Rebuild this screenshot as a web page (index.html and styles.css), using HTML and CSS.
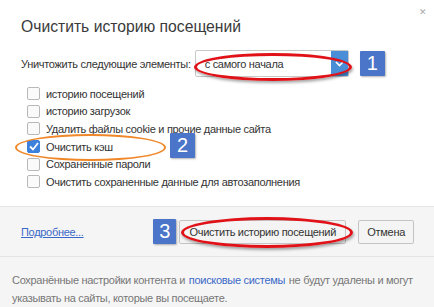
FILE: index.html
```html
<!DOCTYPE html>
<html lang="ru">
<head>
    <meta charset="UTF-8">
    <title>Очистить историю посещений</title>
    <link rel="stylesheet" href="styles.css">
</head>
<body>
    <div class="dialog">
        <span class="close">&#x2715;</span>
        <div class="content">
            <h1 class="title">Очистить историю посещений</h1>
            <div class="period">
                <span class="period-label">Уничтожить следующие элементы:</span>
                <div class="select">
                    <span class="select-text">с самого начала</span>
                    <span class="select-arrow">
                        <svg width="9" height="6" viewBox="0 0 9 6"><path d="M1 1 L4.5 4.5 L8 1" fill="none" stroke="#fff" stroke-width="1.6"/></svg>
                    </span>
                </div>
                <span class="badge">1</span>
            </div>
            <ul class="options">
                <li><span class="box"></span>историю посещений</li>
                <li><span class="box"></span>историю загрузок</li>
                <li><span class="box"></span>Удалить файлы cookie и прочие данные сайта</li>
                <li><span class="box checked">
                    <svg width="10" height="9" viewBox="0 0 10 9"><path d="M1 4.5 L4 7.5 L9 1" fill="none" stroke="#fff" stroke-width="1.8"/></svg>
                </span>Очистить кэш</li>
                <li><span class="box"></span>Сохраненные пароли</li>
                <li><span class="box"></span>Очистить сохраненные данные для автозаполнения</li>
            </ul>
        </div>
        <div class="actions">
            <a href="#" class="more">Подробнее...</a>
            <span class="badge badge-three">3</span>
            <button class="btn btn-main">Очистить историю посещений</button>
            <button class="btn">Отмена</button>
        </div>
        <p class="note">Сохранённые настройки контента и <a href="#">поисковые системы</a> не будут удалены и могут указывать на сайты, которые вы посещаете.</p>

        <!-- пометки поверх скриншота -->
        <span class="badge badge-two">2</span>
        <div class="ring ring-select"></div>
        <div class="ring ring-cache"></div>
        <div class="ring ring-button"></div>
    </div>
</body>
</html>
```

FILE: styles.css
```css
body {
    margin: 0;
    font-family: "Liberation Sans", Arial, sans-serif;
    background: #fff;
}
.dialog {
    position: relative;
    width: 434px;
    height: 307px;
    overflow: hidden;
    background: #fff;
    font-size: 11px;
    letter-spacing: -0.3px;
}
.close {
    position: absolute;
    top: 7px;
    right: 7px;
    font-size: 9px;
    color: #aaa;
}
.content {
    padding: 15px 21px 0 21px;
    height: 191px;
}
.title {
    margin: 0;
    font-size: 15.7px;
    font-weight: normal;
    letter-spacing: 0;
    color: #3a3a3a;
    line-height: 24px;
}
.period {
    display: flex;
    align-items: center;
    margin-top: 11px;
    color: #333;
    white-space: nowrap;
}
.period-label {
    margin-right: 4px;
}
.select {
    display: flex;
    align-items: center;
    width: 152px;
    height: 25px;
    border: 1px solid #c8c8c8;
    border-radius: 2px;
    background: #fff;
}
.select-text {
    flex: 1;
    padding-left: 9px;
}
.select-arrow {
    display: flex;
    align-items: center;
    justify-content: center;
    width: 17px;
    height: 25px;
    background: #4a8ed8;
}
.badge {
    display: inline-flex;
    align-items: center;
    justify-content: center;
    width: 25px;
    height: 25px;
    margin-left: 11px;
    background: #4a75c9;
    color: #fff;
    font-size: 20px;
    letter-spacing: 0;
    border-radius: 1px;
    box-shadow: 1px 1px 2px rgba(0, 0, 0, 0.3);
}
.options {
    list-style: none;
    margin: 8px 0 0 0;
    padding: 0 0 0 6px;
    color: #333;
}
.options li {
    display: flex;
    align-items: center;
    height: 17.6px;
    white-space: nowrap;
}
.box {
    display: inline-flex;
    align-items: center;
    justify-content: center;
    width: 11px;
    height: 11px;
    margin-right: 6px;
    border: 1px solid #b8b8b8;
    border-radius: 2px;
    background: #fafafa;
}
.box.checked {
    background: #3c82dc;
    border-color: #3c82dc;
}
.badge-two {
    position: absolute;
    left: 170px;
    top: 133px;
    margin: 0;
}
.actions {
    display: flex;
    align-items: center;
    height: 49px;
    padding: 0 20px 0 21px;
    background: #f5f5f5;
    border-top: 1px solid #e4e4e4;
    border-bottom: 1px solid #e4e4e4;
}
.more {
    color: #3a68c8;
    margin-right: auto;
}
.badge-three {
    width: 23px;
    margin-left: 0;
    margin-right: 3px;
}
.btn {
    height: 24px;
    padding: 0 8px;
    border: 1px solid #c4c4c4;
    border-radius: 2px;
    background: #f4f4f4;
    font-family: inherit;
    font-size: 11px;
    letter-spacing: -0.3px;
    color: #333;
    white-space: nowrap;
}
.btn-main {
    width: 167px;
    margin-right: 12px;
}
.note {
    margin: 0;
    padding: 14px 12px 0 12px;
    height: 49px;
    background: #f5f5f5;
    line-height: 18px;
    color: #777;
}
.note a {
    color: #3a68c8;
    text-decoration: none;
    margin: 0 1px;
}
.ring {
    position: absolute;
    border-radius: 50%;
}
.ring-select {
    left: 194px;
    top: 53px;
    width: 152px;
    height: 22px;
    border: 3px solid #e01218;
    box-shadow: 1px 2px 3px rgba(0, 0, 0, 0.35);
}
.ring-cache {
    left: 15px;
    top: 134px;
    width: 147px;
    height: 23px;
    border: 2px solid #f0882a;
}
.ring-button {
    left: 181px;
    top: 217px;
    width: 166px;
    height: 25px;
    border: 3px solid #e01218;
    box-shadow: 1px 2px 3px rgba(0, 0, 0, 0.35);
}
```
